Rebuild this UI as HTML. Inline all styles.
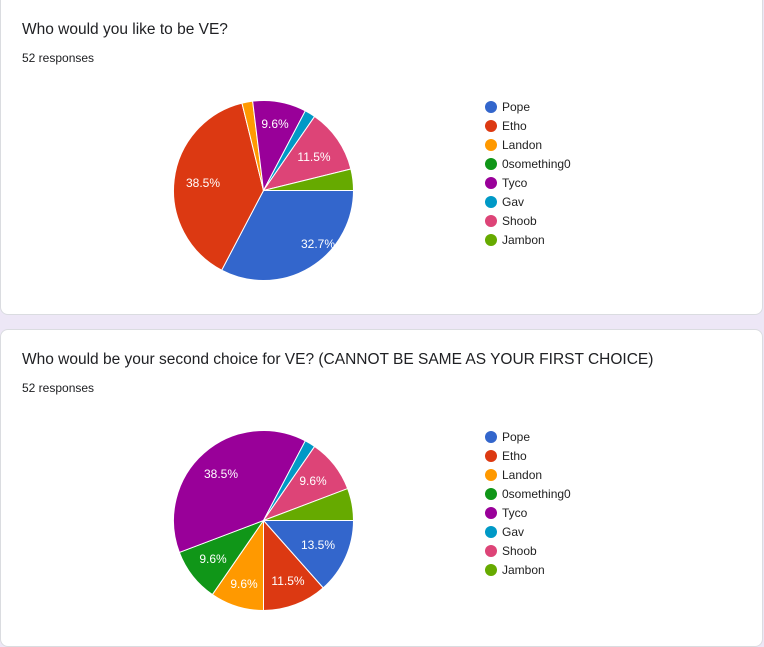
<!DOCTYPE html>
<html><head><meta charset="utf-8"><style>
body{margin:0;width:764px;height:646px;background:#ede7f6;font-family:"Liberation Sans",Arial,sans-serif;position:relative;overflow:hidden}
.card{position:absolute;left:0;width:763px;background:#fff;border:1px solid #dadce0;border-radius:8px;box-sizing:border-box}
.t{position:absolute;left:22px;font-size:15.5px;color:#202124}
.r{position:absolute;left:22px;font-size:12px;color:#202124}
svg{position:absolute;left:0;top:0}
</style></head><body>
<div class="card" style="top:-10px;height:325px"></div>
<div class="card" style="top:329px;height:318px"></div>
<div class="t" style="top:21px">Who would you like to be VE?</div>
<div class="r" style="top:51px">52 responses</div>
<div class="t" style="top:351px">Who would be your second choice for VE? (CANNOT BE SAME AS YOUR FIRST CHOICE)</div>
<div class="r" style="top:381px">52 responses</div>
<svg width="764" height="646" id="s" font-family="Liberation Sans, Arial, sans-serif" font-size="12"></svg>
<script>
var C=["#3366cc","#dc3912","#ff9900","#109618","#990099","#0099c6","#dd4477","#66aa00"];
var N=["Pope","Etho","Landon","0something0","Tyco","Gav","Shoob","Jambon"];
var s=document.getElementById('s'),h='';
function pie(cx,cy,r,v){var a=Math.PI/2,t=52;v.forEach(function(x,i){if(!x)return;var b=a+x/t*2*Math.PI;
var x1=cx+r*Math.sin(a),y1=cy-r*Math.cos(a),x2=cx+r*Math.sin(b),y2=cy-r*Math.cos(b);
h+='<path d="M'+cx+' '+cy+'L'+x1+' '+y1+'A'+r+' '+r+' 0 '+((b-a)>Math.PI?1:0)+' 1 '+x2+' '+y2+'Z" fill="'+C[i]+'" stroke="#fff" stroke-width="1"/>';a=b;});}
function leg(y0){N.forEach(function(n,i){h+='<circle cx="491" cy="'+(y0+19*i)+'" r="6" fill="'+C[i]+'"/><text x="502" y="'+(y0+4+19*i)+'" fill="#222">'+n+'</text>';});}
function lab(a){a.forEach(function(p){h+='<text x="'+p[1]+'" y="'+p[2]+'" fill="#fff" text-anchor="middle">'+p[0]+'</text>';});}
pie(263.5,190.5,90,[17,20,1,0,5,1,6,2]);
pie(263.5,520.5,90,[7,6,5,5,20,1,5,3]);
leg(107);leg(437);
lab([["9.6%",275,128],["11.5%",314,161],["38.5%",203,187],["32.7%",318,248],
["38.5%",221,478],["9.6%",313,485],["13.5%",318,549],["11.5%",288,585],["9.6%",244,588],["9.6%",213,563]]);
s.innerHTML=h;
</script>
</body></html>
